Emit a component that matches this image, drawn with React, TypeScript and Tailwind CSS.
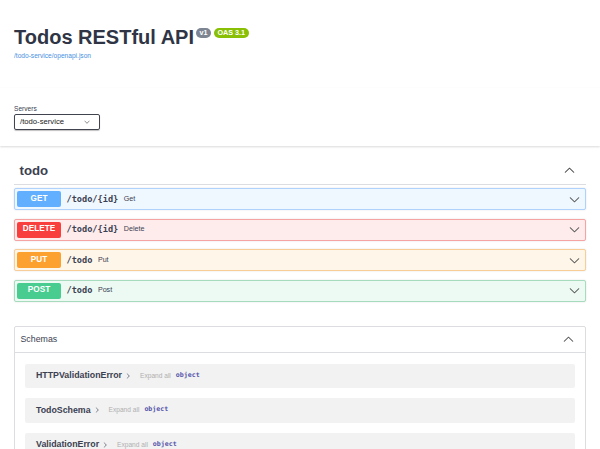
import React from "react";

const Chevron = ({ up = false, className = "" }: { up?: boolean; className?: string }) => (
  <svg viewBox="0 0 20 20" className={className} style={up ? { transform: "rotate(180deg)" } : undefined}>
    <path
      fill="currentColor"
      d="M17.418 6.109c.272-.268.709-.268.979 0s.271.701 0 .969l-7.908 7.83c-.27.268-.707.268-.979 0l-7.908-7.83c-.27-.268-.27-.701 0-.969.271-.268.709-.268.979 0L10 13.25l7.418-7.141z"
    />
  </svg>
);

const ops = [
  { method: "GET", path: "/todo/{id}", summary: "Get", badge: "bg-[#61affe]", box: "bg-[#eff7ff] border-[#aed2fb]" },
  { method: "DELETE", path: "/todo/{id}", summary: "Delete", badge: "bg-[#f93e3e]", box: "bg-[#feecec] border-[#f5a3a3]" },
  { method: "PUT", path: "/todo", summary: "Put", badge: "bg-[#fca130]", box: "bg-[#fff6ea] border-[#f8cd98]" },
  { method: "POST", path: "/todo", summary: "Post", badge: "bg-[#49cc90]", box: "bg-[#edfaf4] border-[#a6dcbd]" },
];

const models = ["HTTPValidationError", "TodoSchema", "ValidationError"];

export default function App() {
  return (
    <div className="min-h-screen bg-white text-[#3b4151] font-['Liberation_Sans',Arial,sans-serif]">
      {/* info */}
      <div className="px-[14px] pt-[27px] pb-[28px]">
        <div className="flex items-start">
          <h2 className="text-[20px] leading-[20px] font-bold text-[#2f3545]">Todos RESTful API</h2>
          <span className="ml-[2px] mt-[1px] rounded-full bg-[#7d8492] px-[3.5px] text-[7.2px] leading-[10px] font-bold text-white">
            v1
          </span>
          <span className="ml-[3px] mt-[1px] rounded-full bg-[#89bf04] px-[3.5px] text-[7.2px] leading-[10px] font-bold text-white">
            OAS 3.1
          </span>
        </div>
        <a className="mt-[5px] block text-[6.6px] leading-[8px] text-[#4990e2]">/todo-service/openapi.json</a>
      </div>

      {/* servers */}
      <div className="bg-white py-[16.5px] px-[14px] shadow-[0_1px_2px_0_rgba(0,0,0,0.15)]">
        <div className="text-[6.6px] leading-[8px]">Servers</div>
        <div className="mt-[1px] flex h-[16px] w-[86px] items-center justify-between rounded-[2px] border border-[#41444e] pl-[5px] pr-[9px] shadow-[0_1px_1px_rgba(0,0,0,0.25)]">
          <span className="text-[7.7px] text-[#222]">/todo-service</span>
          <Chevron className="h-[6px] w-[6px] text-[#444]" />
        </div>
      </div>

      <div className="px-[14px]">
        {/* tag */}
        <div className="mt-[11px] flex items-center justify-between border-b border-[#dcdde0] py-[5.5px] pl-[5.5px] pr-[11px]">
          <h3 className="text-[13.2px] leading-[16px] font-bold">todo</h3>
          <Chevron up className="h-[11px] w-[11px] text-[#444]" />
        </div>

        <div className="mt-[3px] flex flex-col gap-[8.5px]">
          {ops.map((op) => (
            <div
              key={op.method}
              className={`flex h-[22px] items-center rounded-[2px] border pl-[2px] pr-[5px] shadow-[0_0_2px_rgba(0,0,0,0.12)] ${op.box}`}
            >
              <span
                className={`flex h-[16px] w-[44px] items-center justify-center rounded-[2px] text-[8.2px] font-bold text-white ${op.badge}`}
              >
                {op.method}
              </span>
              <span className="px-[5.5px] font-['DejaVu_Sans_Mono',monospace] text-[8.6px] font-bold text-[#3b4151]">
                {op.path}
              </span>
              <span className="text-[7.15px]">{op.summary}</span>
              <Chevron className="ml-auto h-[11px] w-[11px] text-[#555]" />
            </div>
          ))}
        </div>

        {/* schemas */}
        <div className="mt-[24px] rounded-[2px] border border-[#dcdde0]">
          <div className="flex items-center justify-between border-b border-[#dcdde0] py-[5.5px] pl-[5.5px] pr-[11px]">
            <h4 className="text-[8.8px] leading-[14px]">Schemas</h4>
            <Chevron up className="h-[11px] w-[11px] text-[#555]" />
          </div>
          <div className="flex flex-col gap-[10px] px-[10px] pt-[11px] pb-[8px]">
            {models.map((m) => (
              <div key={m} className="flex h-[24.5px] items-center rounded-[2px] bg-[#f2f2f2] pl-[11px]">
                <span className="text-[8.8px] font-bold">{m}</span>
                <svg viewBox="0 0 20 20" className="ml-[3px] h-[6px] w-[6px] text-[#3b4151]">
                  <path
                    fill="currentColor"
                    d="M13.25 10L6.109 2.58c-.268-.27-.268-.707 0-.979.268-.27.701-.27.969 0l7.830 7.908c.268.271.268.709 0 .979l-7.830 7.908c-.268.271-.701.27-.969 0-.268-.269-.268-.707 0-.979L13.25 10z"
                  />
                </svg>
                <span className="ml-[9px] text-[6.6px] text-[#b0b0b0]">Expand all</span>
                <span className="ml-[5px] font-['DejaVu_Sans_Mono',monospace] text-[6.6px] font-bold text-[#55a]">
                  object
                </span>
              </div>
            ))}
          </div>
        </div>
      </div>
    </div>
  );
}
